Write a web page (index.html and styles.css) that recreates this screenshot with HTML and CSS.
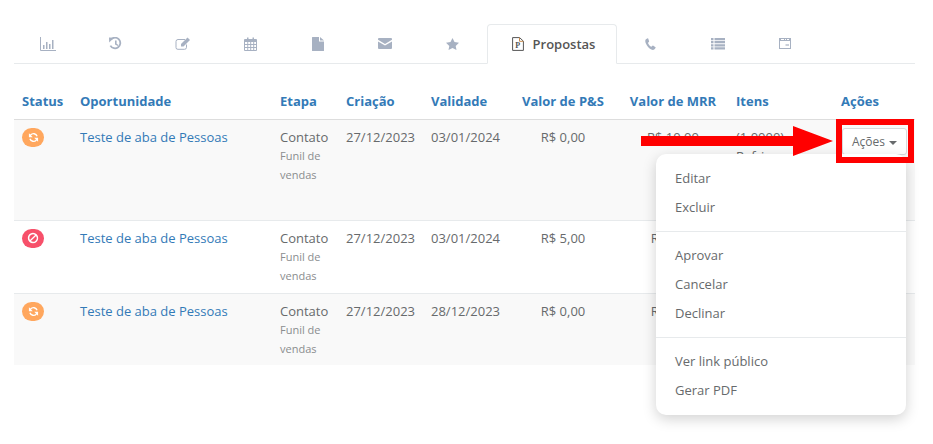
FILE: index.html
```html
<!DOCTYPE html>
<html lang="pt-BR">
<head>
    <meta charset="UTF-8">
    <title>Propostas</title>
    <link rel="stylesheet" href="styles.css">
</head>
<body>
    <div class="panel">
        <div class="tabs">
            <div class="tab"><svg class="ico" width="16" height="14" viewBox="0 0 16 14"><path d="M.5 0v13.500H16" fill="none" stroke="currentColor"/><path d="M3 8h1.500v4H3zM6 5h1.500v7H6zM9 7h1.500v5H9zM12 3h1.500v9H12z"/></svg></div>
            <div class="tab"><svg class="ico" width="13" height="13" viewBox="0 0 13 13"><path d="M2 2.500A5.300 5.300 0 1 1 1.400 8.600" fill="none" stroke="currentColor" stroke-width="1.800"/><path d="M0 .5l5 .2L.2 5.400z"/><path d="M6 3.500h1.600v3.200l2 1.200-.7 1.200L6 7.500z"/></svg></div>
            <div class="tab"><svg class="ico" width="15" height="13" viewBox="0 0 15 13"><path d="M10 2.500H3A2 2 0 0 0 1 4.500v6A1.800 1.800 0 0 0 3 12.300h6.500a2 2 0 0 0 2-2V7.500" fill="none" stroke="currentColor"/><path d="M12.500.5L15 3l-6.500 6.500H6V7z"/></svg></div>
            <div class="tab"><svg class="ico" width="13" height="14" viewBox="0 0 13 14"><path fill-rule="evenodd" d="M1 2h2V.5h1.500V2h4V.5H10V2h2a1 1 0 0 1 1 1v10a1 1 0 0 1-1 1H1a1 1 0 0 1-1-1V3a1 1 0 0 1 1-1zM1 5v2h2.300V5zm3.200 0v2h2V5zm3 0v2h2V5zm3 0v2H12V5zM1 8v2h2.300V8zm3.200 0v2h2V8zm3 0v2h2V8zm3 0v2H12V8zM1 11v2h2.300v-2zm3.200 0v2h2v-2zm3 0v2h2v-2zm3 0v2H12v-2z"/></svg></div>
            <div class="tab"><svg class="ico" width="12" height="14" viewBox="0 0 12 14"><path d="M0 .5a.5.5 0 0 1 .5-.5H7v4.500h5V13.500a.5.5 0 0 1-.5.5H.5a.5.5 0 0 1-.5-.5z"/><path d="M8 0l4 3.500H8z"/></svg></div>
            <div class="tab"><svg class="ico" width="14" height="11" viewBox="0 0 14 11"><path d="M1 0h12a1 1 0 0 1 1 1v.8L7 6 0 1.800V1a1 1 0 0 1 1-1z"/><path d="M0 3.400L7 7.600l7-4.200V10a1 1 0 0 1-1 1H1a1 1 0 0 1-1-1z"/></svg></div>
            <div class="tab"><svg class="ico" width="13" height="12" viewBox="0 0 13 12"><path d="M6.500 0l2 4.100 4.500.6-3.300 3.200.8 4.100-4-2.100-4 2.100.8-4.100L0 4.700l4.500-.6z"/></svg></div>
            <div class="tab active">
                <svg class="ico-doc" width="12" height="14" viewBox="0 0 12 14"><path d="M.6.600h7l3.800 3.600v9.200H.6z" fill="#fff" stroke="#555"/><path d="M7.500.600v3.700h3.900" fill="none" stroke="#c98a4b"/><text x="3.300" y="11" class="doc-letter">P</text></svg>
                <span>Propostas</span>
            </div>
            <div class="tab"><svg class="ico" width="11" height="12" viewBox="0 0 11 12"><path d="M2.600.3L.9 1.200C.1 2 0 3.500.9 5.600c1 2.400 3 4.800 5.400 6 1.300.500 2.400.400 3.200-.3l1.200-1.500-.2-.6-2.500-1.600-.6.100-1 1.100c-1.400-.5-3-2.500-3.500-4l1.100-.9.100-.6L3.200.4z"/></svg></div>
            <div class="tab"><svg class="ico" width="14" height="12" viewBox="0 0 14 12"><path d="M0 0h2.500v2.200H0zM3.500 0H14v2.200H3.500zM0 3.100h2.500v2.200H0zM3.500 3.100H14v2.200H3.500zM0 6.200h2.500v2.200H0zM3.500 6.200H14v2.200H3.500zM0 9.300h2.500v2.200H0zM3.500 9.300H14v2.200H3.500z"/></svg></div>
            <div class="tab"><svg class="ico" width="12" height="11" viewBox="0 0 12 11"><path fill-rule="evenodd" d="M0 0h12v11H0zm1 3v7h10V3zm1-2v1h3V1zm4 0v1h1V1zm2 0v1h2V1z"/><path d="M6.500 6H10v2H6.500z" opacity=".6"/></svg></div>
        </div>

        <table class="deals">
            <thead>
                <tr>
                    <th class="col-status">Status</th>
                    <th class="col-name">Oportunidade</th>
                    <th class="col-stage">Etapa</th>
                    <th class="col-date">Criação</th>
                    <th class="col-date2">Validade</th>
                    <th class="col-ps num">Valor de P&amp;S</th>
                    <th class="col-mrr num mrr">Valor de MRR</th>
                    <th class="col-items">Itens</th>
                    <th class="col-actions">Ações</th>
                </tr>
            </thead>
            <tbody>
                <tr class="row-tall odd">
                    <td><span class="badge orange"><svg width="11" height="11" viewBox="0 0 12 12"><path d="M10.600 4.400A4.800 4.800 0 0 0 2.400 2.800L1 1.400V5.600h4.200L3.300 3.900a3.500 3.500 0 0 1 6 .9zM1.400 7.600a4.800 4.800 0 0 0 8.200 1.600l1.400 1.400V6.400H6.800l1.900 1.700a3.500 3.500 0 0 1-6-.9z"/></svg></span></td>
                    <td><a class="link">Teste de aba de Pessoas</a></td>
                    <td>Contato<small>Funil de vendas</small></td>
                    <td>27/12/2023</td>
                    <td>03/01/2024</td>
                    <td class="num">R$ 0,00</td>
                    <td class="num mrr">R$ 10,00</td>
                    <td>(1,0000)<br>Refri</td>
                    <td><button class="btn-actions">Ações <i class="caret"></i></button></td>
                </tr>
                <tr class="row-mid">
                    <td><span class="badge red"><svg width="12" height="12" viewBox="0 0 12 12"><path fill-rule="evenodd" d="M6 .8a5.200 5.200 0 1 0 0 10.400A5.200 5.200 0 0 0 6 .8zM2.300 6a3.700 3.700 0 0 1 5.800-3L3 8.100A3.700 3.700 0 0 1 2.300 6zm1.600 3.100L9 3.900a3.700 3.700 0 0 1-5.100 5.200z"/></svg></span></td>
                    <td><a class="link">Teste de aba de Pessoas</a></td>
                    <td>Contato<small>Funil de vendas</small></td>
                    <td>27/12/2023</td>
                    <td>03/01/2024</td>
                    <td class="num">R$ 5,00</td>
                    <td class="num mrr">R$ 5,00</td>
                    <td></td>
                    <td></td>
                </tr>
                <tr class="row-last odd">
                    <td><span class="badge orange"><svg width="11" height="11" viewBox="0 0 12 12"><path d="M10.600 4.400A4.800 4.800 0 0 0 2.400 2.800L1 1.400V5.600h4.200L3.300 3.900a3.500 3.500 0 0 1 6 .9zM1.400 7.600a4.800 4.800 0 0 0 8.200 1.600l1.400 1.400V6.400H6.800l1.900 1.700a3.500 3.500 0 0 1-6-.9z"/></svg></span></td>
                    <td><a class="link">Teste de aba de Pessoas</a></td>
                    <td>Contato<small>Funil de vendas</small></td>
                    <td>27/12/2023</td>
                    <td>28/12/2023</td>
                    <td class="num">R$ 0,00</td>
                    <td class="num mrr">R$ 0,00</td>
                    <td></td>
                    <td></td>
                </tr>
            </tbody>
        </table>

        <div class="menu">
            <a>Editar</a>
            <a>Excluir</a>
            <hr>
            <a>Aprovar</a>
            <a>Cancelar</a>
            <a>Declinar</a>
            <hr>
            <a>Ver link público</a>
            <a>Gerar PDF</a>
        </div>

        <div class="arrow"></div>
        <div class="highlight"></div>
    </div>
</body>
</html>
```

FILE: styles.css
```css
* {
    box-sizing: border-box;
}

body {
    margin: 0;
    background: #fff;
    font-family: 'Open Sans', sans-serif;
    font-size: 13px;
    color: #676a6c;
    height: 444px;
    overflow: hidden;
}

.panel {
    position: relative;
    width: 901px;
    margin: 24px 0 0 14px;
}

.tabs {
    display: flex;
    height: 40px;
    border-bottom: 1px solid #e7eaec;
}

.tab {
    width: 67.500px;
    display: flex;
    align-items: center;
    justify-content: center;
    color: #a7b1c2;
}

.ico {
    fill: currentColor;
}

.tab.active {
    width: 130px;
    height: 40px;
    gap: 9px;
    padding-left: 4px;
    color: #555;
    font-weight: 600;
    background: #fff;
    border: 1px solid #e7eaec;
    border-bottom-color: #fff;
    border-radius: 4px 4px 0 0;
}

.doc-letter {
    font-family: 'Liberation Serif', serif;
    font-size: 8px;
    font-weight: 700;
    fill: #555;
}

.deals {
    width: 901px;
    margin-top: 19px;
    border-collapse: collapse;
    table-layout: fixed;
}

.deals th {
    height: 36px;
    padding: 0 0 0 8px;
    text-align: left;
    font-weight: 700;
    color: #337ab7;
    border-bottom: 1px solid #ddd;
}

.deals td {
    padding: 8px 0 0 8px;
    vertical-align: top;
    line-height: 19px;
    border-top: 1px solid #e7eaec;
}

.deals tbody tr:first-child td {
    border-top: 0;
}

.deals .num {
    text-align: center;
}

.deals .mrr {
    padding-right: 3px;
}

.col-status { width: 58px; }
.col-name { width: 200px; }
.col-stage { width: 66px; }
.col-date { width: 85px; }
.col-date2 { width: 82px; }
.col-ps { width: 108px; }
.col-mrr { width: 115px; }
.col-items { width: 105px; }
.col-actions { width: 82px; }

.odd td {
    background: #f9f9f9;
}

.row-tall {
    height: 101px;
}

.row-mid {
    height: 73px;
}

.row-last {
    height: 72px;
}

.link {
    color: #337ab7;
}

small {
    display: block;
    margin-top: -1px;
    font-size: 11px;
    color: #8a8d8f;
}

.badge {
    display: flex;
    align-items: center;
    justify-content: center;
    width: 22px;
    height: 19px;
    border-radius: 10px;
    fill: #fff;
}

.orange {
    background: #ffa75e;
}

.red {
    background: #f7506a;
}

.btn-actions {
    display: block;
    width: 65px;
    height: 27px;
    margin-left: 1px;
    padding: 1px 0 0;
    font: 12px 'Open Sans', sans-serif;
    color: #676a6c;
    background: #fff;
    border: 1px solid #d8dadc;
    border-radius: 3px;
}

.caret {
    display: inline-block;
    margin-left: 1px;
    vertical-align: middle;
    border-top: 4px solid #676a6c;
    border-left: 4px solid transparent;
    border-right: 4px solid transparent;
}

.menu {
    position: absolute;
    top: 130px;
    left: 642px;
    width: 250px;
    height: 261px;
    padding: 10px 0;
    background: #fff;
    border-radius: 10px;
    box-shadow: 0 4px 14px rgba(0, 0, 0, 0.18);
}

.menu a {
    display: block;
    height: 29px;
    padding-left: 19px;
    line-height: 29px;
}

.menu hr {
    height: 1px;
    margin: 9px 0;
    border: 0;
    background: #e7eaec;
}

.arrow {
    position: absolute;
    top: 102px;
    left: 627px;
    width: 192px;
    height: 30px;
    background: #f00;
    clip-path: polygon(0 10px, 152px 10px, 152px 0, 192px 15px, 152px 30px, 152px 20px, 0 20px);
}

.highlight {
    position: absolute;
    top: 95px;
    left: 822px;
    width: 78px;
    height: 44px;
    border: 6px solid #f00;
}
```
